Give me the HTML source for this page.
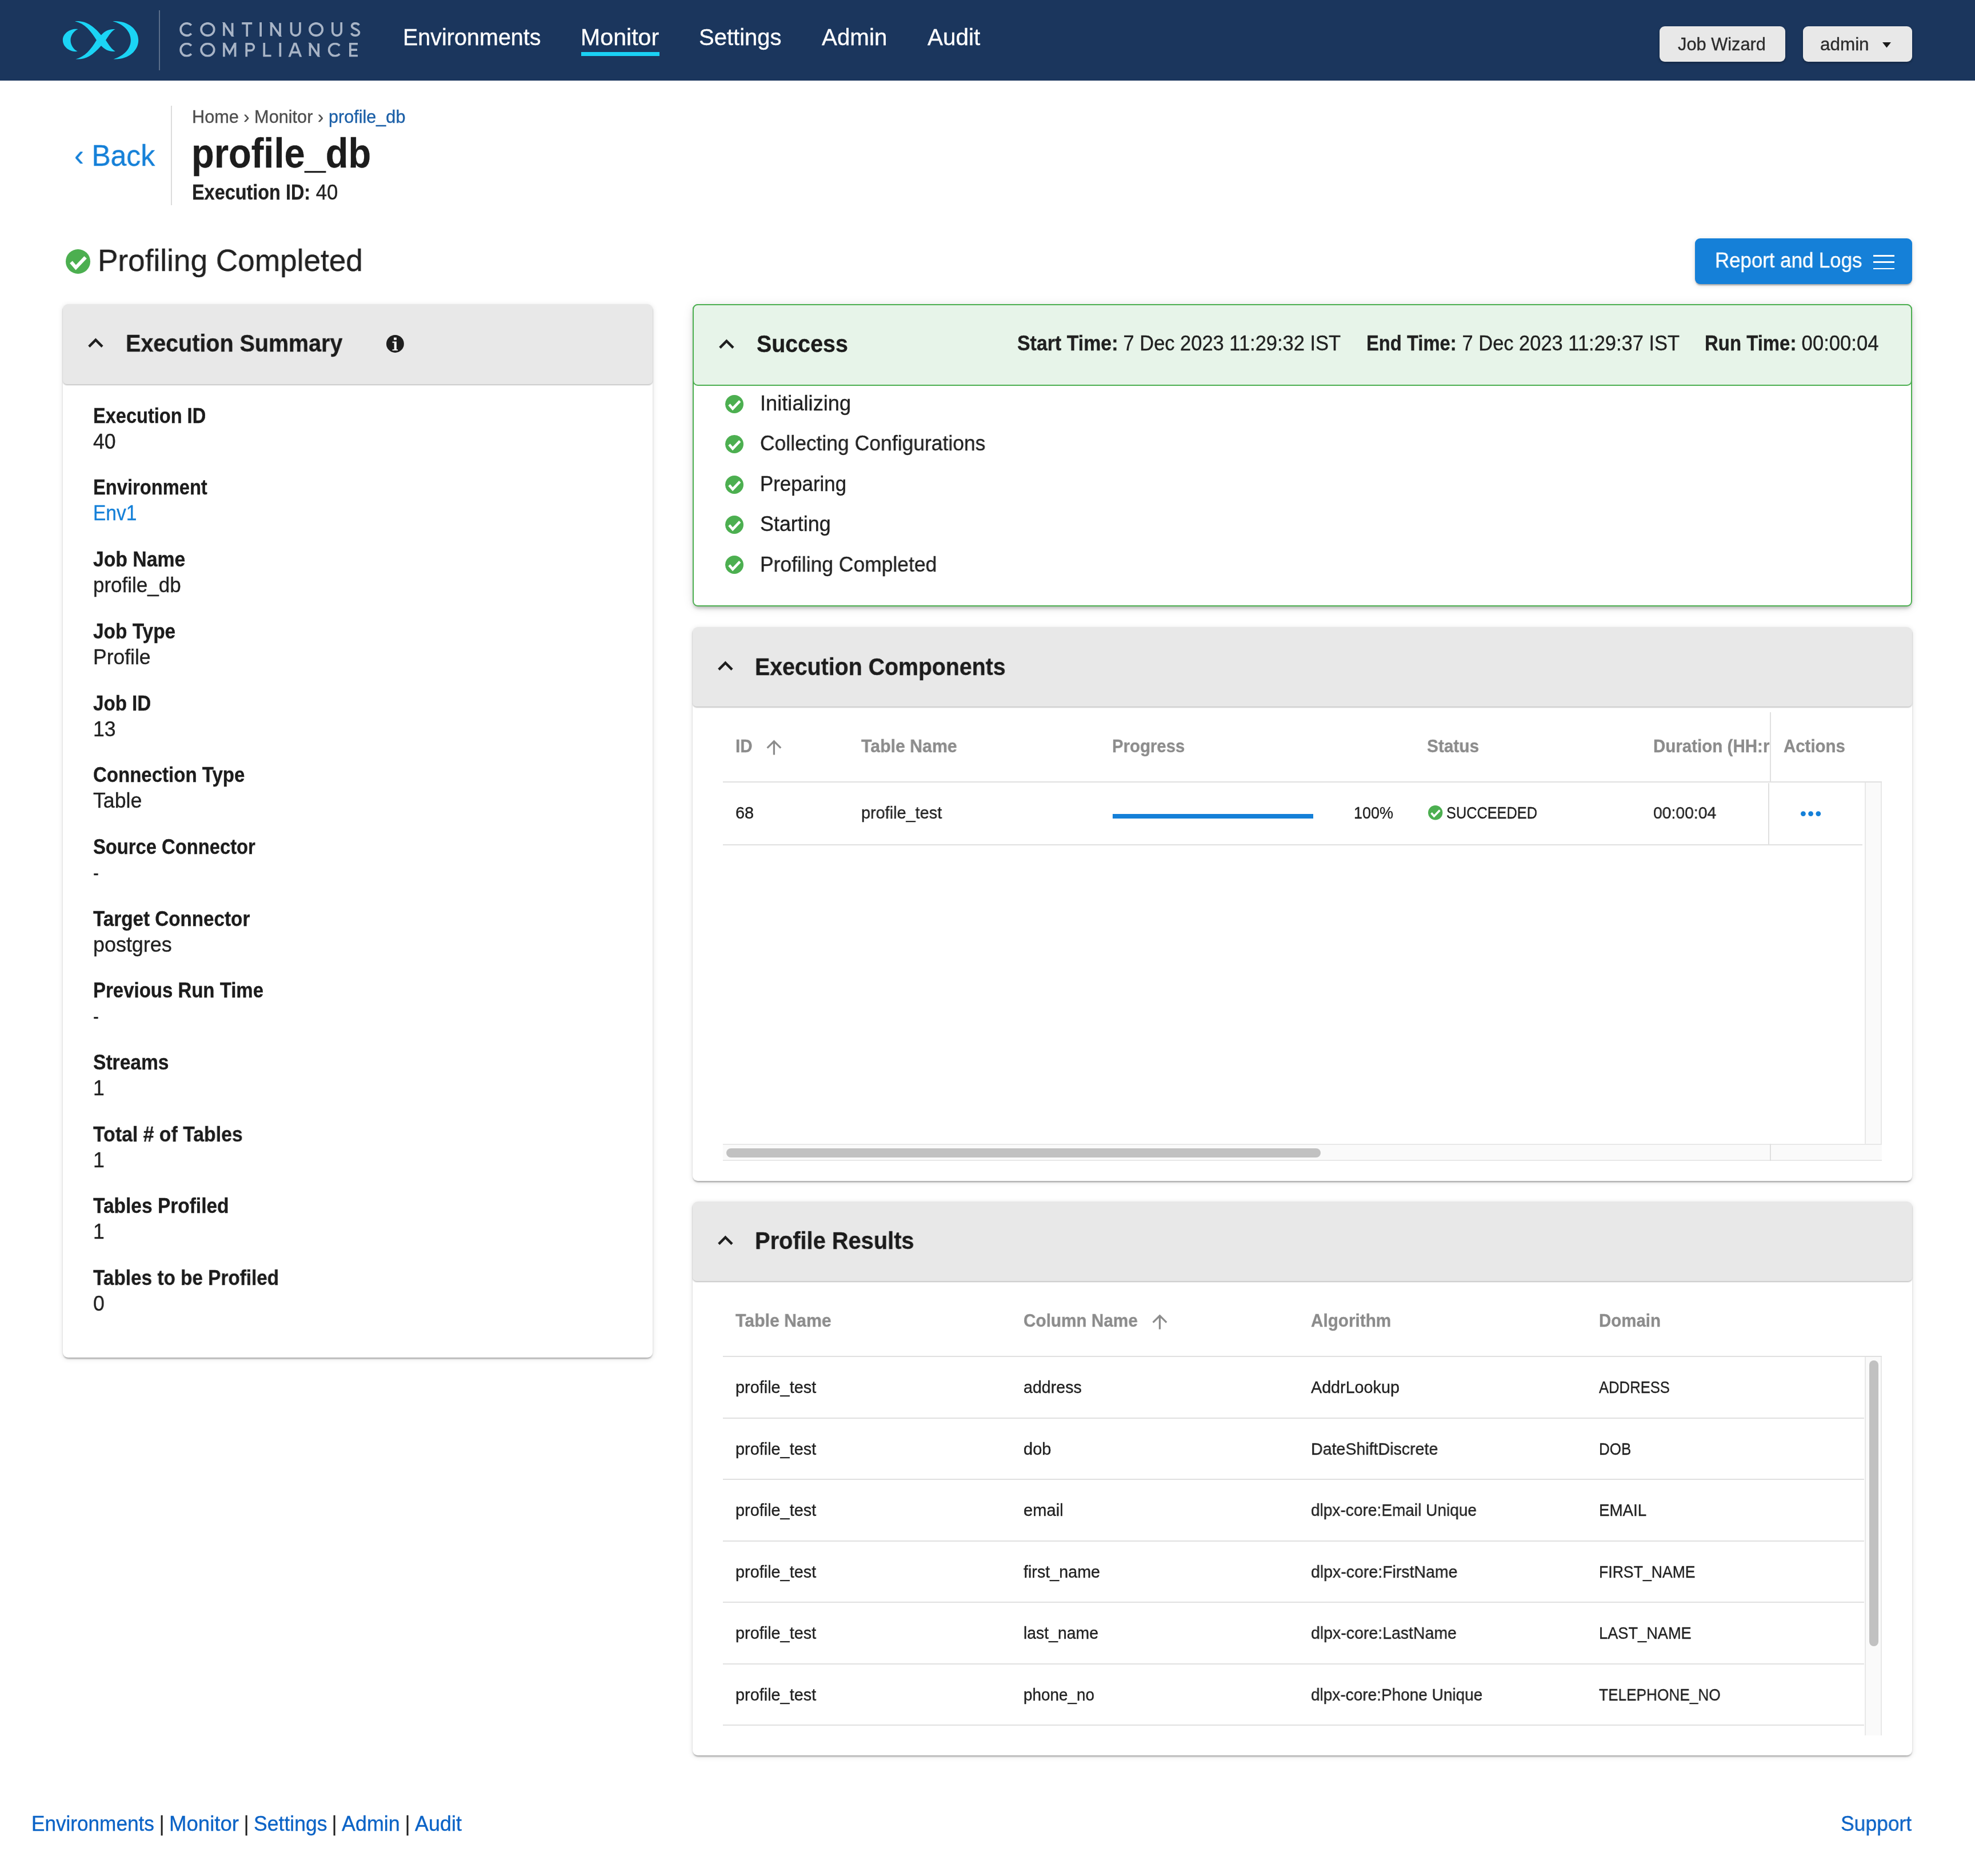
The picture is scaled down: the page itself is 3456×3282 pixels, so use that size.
<!DOCTYPE html>
<html><head><meta charset="utf-8"><title>profile_db - Monitor</title>
<style>
html,body{margin:0;padding:0;}
body{width:3456px;height:3282px;position:relative;overflow:hidden;background:#fff;font-family:"Liberation Sans",sans-serif;color:#212121;}
#root{position:absolute;left:0;top:0;width:3456px;height:3282px;overflow:hidden;will-change:transform;}
#root div{position:absolute;box-sizing:border-box;}
#root svg{position:absolute;overflow:visible;}
.t{position:absolute;white-space:pre;transform-origin:0 50%;display:block;-webkit-text-stroke:0.35px currentColor;}
</style></head>
<body><div id="root">
<div style="left:0px;top:0px;width:3456px;height:141px;background:#1b365d;"></div>
<svg style="left:100.0px;top:25.0px" width="160.0" height="90.0" viewBox="0 0 1975 1111" ><g fill="#1bd4f5"><path d="M450 322C300 300 122 400 122 560C122 720 300 830 440 800C350 760 290 660 290 560C290 460 350 370 450 322Z"/><path d="M385 150C600 140 760 220 950 450C1040 350 1140 310 1255 322C1180 360 1120 450 1050 560C1120 670 1180 760 1255 800C1140 815 1040 775 950 680C760 900 600 985 400 968C600 920 730 760 850 560C730 360 600 200 385 150Z"/><path d="M1200 150C1520 130 1755 320 1755 560C1755 800 1520 990 1215 968C1450 900 1590 740 1590 560C1590 380 1450 215 1200 150Z"/></g></svg>
<svg style="left:300.0px;top:25.0px" width="350.0" height="90.0" viewBox="0 0 1975 508" ><defs><clipPath id="cl1"><rect x="0" y="78.5" width="1975" height="142.0"/></clipPath><clipPath id="cl2"><rect x="0" y="280.5" width="1975" height="140.0"/></clipPath></defs><g fill="none" stroke="#a8b4c6" stroke-width="21" stroke-linejoin="miter" stroke-miterlimit="10"><path clip-path="url(#cl1)" d="M196.0 109.0A60.5 60.5 0 1 0 196.0 190.0M293.5 149.5a64 60.5 0 1 0 128 0a64 60.5 0 1 0 -128 0ZM518.5 86.5V212.5M601.5 86.5V212.5M501.9 61.3L618.1 237.7M695 89H797M746 89V220.5M881 78.5V220.5M985.5 86.5V212.5M1072.5 86.5V212.5M968.1 61.3L1089.9 237.7M1182.5 78.5V166.5a43.500 43.500 0 0 0 87 0V78.5M1365.500 149.5a63 60.5 0 1 0 126 0a63 60.5 0 1 0 -126 0ZM1590.500 78.5V166.5a43.500 43.500 0 0 0 87 0V78.5M1852 108C1840 84 1790 80 1782 112C1776 150 1852 140 1854 182C1852 218 1790 218 1776 186"/><path clip-path="url(#cl2)" d="M196.0 310.0A60.5 60.5 0 1 0 196.0 391.0M293.5 350.5a64 60.5 0 1 0 128 0a64 60.5 0 1 0 -128 0ZM518.5 420.5V280.5M629.5 420.5V280.5M505 258.5L574 384L643 258.5M740.5 420.5V291H781a33.500 33.500 0 0 1 0 67H740.5M915.5 280.5V410H985M1074 280.5V420.5M1160 434.5L1221 272.5L1282 434.5M1186 376H1256M1368.5 288.5V412.5M1451.5 288.5V412.5M1351.9 263.7L1468.1 437.3M1661.0 310.0A60.5 60.5 0 1 0 1661.0 391.0M1840 291H1765.500V410H1840M1765.500 350.5H1834"/></g></svg>
<div style="left:278px;top:18px;width:2px;height:105px;background:rgba(255,255,255,.28);"></div>
<div style="left:1017px;top:91px;width:136.5px;height:6.5px;background:#1ad1f5;"></div>
<div style="left:2904px;top:46px;width:220px;height:62px;background:#e8e8e8;border-radius:9px;box-shadow:0 2px 4px rgba(0,0,0,.3);"></div>
<div style="left:3155px;top:46px;width:191px;height:62px;background:#e8e8e8;border-radius:9px;box-shadow:0 2px 4px rgba(0,0,0,.3);"></div>
<svg style="left:3293.5px;top:73.5px" width="15.0" height="9.5" viewBox="0 0 15 9.5" ><path d="M0 0h15l-7.5 9.5z" fill="#1a1a1a"/></svg>
<div style="left:299px;top:185px;width:2px;height:174px;background:#dcdcdc;"></div>
<svg style="left:115.0px;top:435.5px" width="43.0" height="43.0" viewBox="0 0 100 100" ><circle cx="50" cy="50" r="50" fill="#4caf50"/><path d="M22 52.3L41.1 74.6L80.5 33.2" fill="none" stroke="#fff" stroke-width="14" stroke-linejoin="miter"/></svg>
<div style="left:2966px;top:417px;width:380px;height:80px;background:#1580d8;border-radius:9px;box-shadow:0 4px 3px -2px rgba(0,0,0,.2),0 2px 3px 0 rgba(0,0,0,.14),0 2px 10px 0 rgba(0,0,0,.13);"></div>
<div style="left:3278px;top:446px;width:37px;height:2.6px;background:#fff;"></div>
<div style="left:3278px;top:457.4px;width:37px;height:2.6px;background:#fff;"></div>
<div style="left:3278px;top:468.9px;width:37px;height:2.6px;background:#fff;"></div>
<div style="left:110px;top:532px;width:1032px;height:1843px;background:#fff;border-radius:9px;box-shadow:0 4px 3px -2px rgba(0,0,0,.2),0 2px 3px 0 rgba(0,0,0,.14),0 2px 10px 0 rgba(0,0,0,.13);"></div>
<div style="left:110px;top:532px;width:1032px;height:140px;background:#e8e8e8;border-radius:9px 9px 7px 7px;box-shadow:0 2px 2px rgba(0,0,0,.22);"></div>
<svg style="left:141.2px;top:574.4px" width="52.8" height="52.8" viewBox="0 0 24 24" ><path fill="#1f1f1f" d="M12 8l-6 6 1.41 1.41L12 10.83l4.59 4.59L18 14z"/></svg>
<svg style="left:676.1px;top:585.8px" width="30.9" height="30.9" viewBox="0 0 100 100" ><circle cx="50" cy="50" r="50" fill="#1e1e1e"/><path fill="#f2f2f2" d="M42.3 14.4H58V28.5H42.3ZM34.4 37.4H58V81.700H65V88.600H34.4V81.700H44.3V44.3H34.4Z"/></svg>
<div style="left:1212px;top:532px;width:2134px;height:529px;background:#fff;border:2px solid #4caf50;border-radius:9px;box-shadow:0 5px 6px -3px rgba(0,0,0,.2),0 4px 10px 0 rgba(0,0,0,.1),0 2px 18px 0 rgba(0,0,0,.1);"></div>
<div style="left:1212px;top:532px;width:2134px;height:143px;background:#e7f4e9;border:2px solid #4caf50;border-radius:9px;"></div>
<svg style="left:1245.3px;top:576.3px" width="52.8" height="52.8" viewBox="0 0 24 24" ><path fill="#1f1f1f" d="M12 8l-6 6 1.41 1.41L12 10.83l4.59 4.59L18 14z"/></svg>
<svg style="left:1268.7px;top:690.8px" width="32.0" height="32.0" viewBox="0 0 100 100" ><circle cx="50" cy="50" r="50" fill="#4caf50"/><path d="M22 52.3L41.1 74.6L80.5 33.2" fill="none" stroke="#fff" stroke-width="14" stroke-linejoin="miter"/></svg>
<svg style="left:1268.7px;top:761.1px" width="32.0" height="32.0" viewBox="0 0 100 100" ><circle cx="50" cy="50" r="50" fill="#4caf50"/><path d="M22 52.3L41.1 74.6L80.5 33.2" fill="none" stroke="#fff" stroke-width="14" stroke-linejoin="miter"/></svg>
<svg style="left:1268.7px;top:831.5px" width="32.0" height="32.0" viewBox="0 0 100 100" ><circle cx="50" cy="50" r="50" fill="#4caf50"/><path d="M22 52.3L41.1 74.6L80.5 33.2" fill="none" stroke="#fff" stroke-width="14" stroke-linejoin="miter"/></svg>
<svg style="left:1268.7px;top:901.8px" width="32.0" height="32.0" viewBox="0 0 100 100" ><circle cx="50" cy="50" r="50" fill="#4caf50"/><path d="M22 52.3L41.1 74.6L80.5 33.2" fill="none" stroke="#fff" stroke-width="14" stroke-linejoin="miter"/></svg>
<svg style="left:1268.7px;top:972.2px" width="32.0" height="32.0" viewBox="0 0 100 100" ><circle cx="50" cy="50" r="50" fill="#4caf50"/><path d="M22 52.3L41.1 74.6L80.5 33.2" fill="none" stroke="#fff" stroke-width="14" stroke-linejoin="miter"/></svg>
<div style="left:1212px;top:1097px;width:2134px;height:969px;background:#fff;border-radius:9px;box-shadow:0 4px 3px -2px rgba(0,0,0,.2),0 2px 3px 0 rgba(0,0,0,.14),0 2px 10px 0 rgba(0,0,0,.13);"></div>
<div style="left:1212px;top:1097px;width:2134px;height:139px;background:#e8e8e8;border-radius:9px 9px 7px 7px;box-shadow:0 2px 2px rgba(0,0,0,.22);"></div>
<svg style="left:1243.2px;top:1138.9px" width="52.8" height="52.8" viewBox="0 0 24 24" ><path fill="#1f1f1f" d="M12 8l-6 6 1.41 1.41L12 10.83l4.59 4.59L18 14z"/></svg>
<svg style="left:1334.8px;top:1287.5px" width="38.9" height="38.9" viewBox="0 0 24 24" ><path fill="#8c8c8c" d="M4 12l1.41 1.41L11 7.83V20h2V7.83l5.58 5.59L20 12l-8-8-8 8z"/></svg>
<div style="left:3097px;top:1246px;width:2px;height:122px;background:#e0e0e0;"></div>
<div style="left:3099px;top:1246px;width:194px;height:121px;background:#fff;"></div>
<div style="left:1265px;top:1367px;width:2028px;height:2px;background:#e0e0e0;"></div>
<div style="left:1947px;top:1424px;width:351px;height:8px;background:#1580d8;"></div>
<svg style="left:2498.9px;top:1408.7px" width="25.4" height="25.4" viewBox="0 0 100 100" ><circle cx="50" cy="50" r="50" fill="#4caf50"/><path d="M22 52.3L41.1 74.6L80.5 33.2" fill="none" stroke="#fff" stroke-width="14" stroke-linejoin="miter"/></svg>
<div style="left:3094px;top:1370px;width:2px;height:107px;background:#e0e0e0;"></div>
<svg style="left:3140.0px;top:1410.0px" width="60.0" height="28.0" viewBox="0 0 60 28" ><g fill="#1580d8"><circle cx="15.4" cy="13.6" r="4.4"/><circle cx="28.6" cy="13.6" r="4.4"/><circle cx="41.8" cy="13.6" r="4.4"/></g></svg>
<div style="left:1265px;top:1477px;width:1994px;height:2px;background:#e0e0e0;"></div>
<div style="left:3263px;top:1369px;width:30px;height:633px;background:#fafafa;border-left:2px solid #e8e8e8;border-right:2px solid #e8e8e8;"></div>
<div style="left:1265px;top:2001px;width:2028px;height:30px;background:#fafafa;border-top:2px solid #e8e8e8;border-bottom:2px solid #e8e8e8;"></div>
<div style="left:3097px;top:2001px;width:2px;height:30px;background:#e0e0e0;"></div>
<div style="left:1271px;top:2009px;width:1040px;height:16px;background:#c1c1c1;border-radius:8px;"></div>
<div style="left:1212px;top:2102px;width:2134px;height:969px;background:#fff;border-radius:9px;box-shadow:0 4px 3px -2px rgba(0,0,0,.2),0 2px 3px 0 rgba(0,0,0,.14),0 2px 10px 0 rgba(0,0,0,.13);"></div>
<div style="left:1212px;top:2102px;width:2134px;height:139px;background:#e8e8e8;border-radius:9px 9px 7px 7px;box-shadow:0 2px 2px rgba(0,0,0,.22);"></div>
<svg style="left:1243.2px;top:2143.9px" width="52.8" height="52.8" viewBox="0 0 24 24" ><path fill="#1f1f1f" d="M12 8l-6 6 1.41 1.41L12 10.83l4.59 4.59L18 14z"/></svg>
<svg style="left:2010.0px;top:2292.5px" width="38.9" height="38.9" viewBox="0 0 24 24" ><path fill="#8c8c8c" d="M4 12l1.41 1.41L11 7.83V20h2V7.83l5.58 5.59L20 12l-8-8-8 8z"/></svg>
<div style="left:1265px;top:2372px;width:2028px;height:2px;background:#e0e0e0;"></div>
<div style="left:1265px;top:2479.6px;width:1997px;height:2px;background:#e0e0e0;"></div>
<div style="left:1265px;top:2587.1px;width:1997px;height:2px;background:#e0e0e0;"></div>
<div style="left:1265px;top:2694.6px;width:1997px;height:2px;background:#e0e0e0;"></div>
<div style="left:1265px;top:2802.1px;width:1997px;height:2px;background:#e0e0e0;"></div>
<div style="left:1265px;top:2909.6px;width:1997px;height:2px;background:#e0e0e0;"></div>
<div style="left:1265px;top:3017.1px;width:1997px;height:2px;background:#e0e0e0;"></div>
<div style="left:3263px;top:2374px;width:30px;height:662px;background:#fafafa;border-left:2px solid #e8e8e8;border-right:2px solid #e8e8e8;"></div>
<div style="left:3271px;top:2380px;width:16px;height:500px;background:#c1c1c1;border-radius:8px;"></div>
<span class="t" style="left:704.6px;top:26.1px;font-size:40.59px;line-height:79px;color:#ffffff;transform:scaleX(0.9738);">Environments</span>
<span class="t" style="left:1015.9px;top:26.1px;font-size:40.59px;line-height:79px;color:#ffffff;transform:scaleX(1.0138);">Monitor</span>
<span class="t" style="left:1222.7px;top:26.1px;font-size:40.59px;line-height:79px;color:#ffffff;transform:scaleX(0.9858);">Settings</span>
<span class="t" style="left:1437.7px;top:26.1px;font-size:40.59px;line-height:79px;color:#ffffff;transform:scaleX(0.9944);">Admin</span>
<span class="t" style="left:1622.7px;top:26.1px;font-size:40.59px;line-height:79px;color:#ffffff;transform:scaleX(0.9984);">Audit</span>
<span class="t" style="left:2936.2px;top:46.4px;font-size:31.57px;line-height:62px;color:#2b2b2b;transform:scaleX(0.9745);">Job Wizard</span>
<span class="t" style="left:3185.1px;top:46.4px;font-size:31.57px;line-height:62px;color:#2b2b2b;transform:scaleX(0.9958);">admin</span>
<span class="t" style="left:129.6px;top:219.6px;font-size:52.68px;line-height:103px;color:#1580d8;transform:scaleX(0.9453);">‹ Back</span>
<span class="t" style="left:336.1px;top:173.1px;font-size:31.57px;line-height:62px;color:#4d4d4d;transform:scaleX(0.9719);">Home › Monitor › </span>
<span class="t" style="left:574.8px;top:173.1px;font-size:31.57px;line-height:62px;color:#1b5fa7;transform:scaleX(0.9696);">profile_db</span>
<span class="t" style="left:335.0px;top:198.0px;font-size:72.16px;line-height:141px;font-weight:700;color:#1c1c1c;transform:scaleX(0.9008);">profile_db</span>
<span class="t" style="left:336.0px;top:302.1px;font-size:36.08px;line-height:70px;font-weight:700;transform:scaleX(0.8983);">Execution ID:</span>
<span class="t" style="left:543.0px;top:302.1px;font-size:36.08px;line-height:70px;transform:scaleX(0.9628);"> 40</span>
<span class="t" style="left:171.3px;top:402.4px;font-size:54.12px;line-height:106px;transform:scaleX(0.9824);">Profiling Completed</span>
<span class="t" style="left:3001.0px;top:421.0px;font-size:36.08px;line-height:70px;color:#ffffff;transform:scaleX(0.9647);">Report and Logs</span>
<span class="t" style="left:219.6px;top:558.0px;font-size:43.30px;line-height:84px;font-weight:700;color:#1c1c1c;transform:scaleX(0.9113);">Execution Summary</span>
<span class="t" style="left:162.5px;top:692.7px;font-size:36.08px;line-height:70px;font-weight:700;color:#1c1c1c;transform:scaleX(0.9023);">Execution ID</span>
<span class="t" style="left:162.5px;top:737.7px;font-size:36.08px;line-height:70px;transform:scaleX(0.9861);">40</span>
<span class="t" style="left:162.5px;top:818.4px;font-size:36.08px;line-height:70px;font-weight:700;color:#1c1c1c;transform:scaleX(0.9059);">Environment</span>
<span class="t" style="left:162.5px;top:863.4px;font-size:36.08px;line-height:70px;color:#1580d8;transform:scaleX(0.9277);">Env1</span>
<span class="t" style="left:162.5px;top:944.1px;font-size:36.08px;line-height:70px;font-weight:700;color:#1c1c1c;transform:scaleX(0.9352);">Job Name</span>
<span class="t" style="left:162.5px;top:989.1px;font-size:36.08px;line-height:70px;transform:scaleX(0.9697);">profile_db</span>
<span class="t" style="left:162.5px;top:1069.8px;font-size:36.08px;line-height:70px;font-weight:700;color:#1c1c1c;transform:scaleX(0.9258);">Job Type</span>
<span class="t" style="left:162.5px;top:1114.8px;font-size:36.08px;line-height:70px;transform:scaleX(0.9837);">Profile</span>
<span class="t" style="left:162.5px;top:1195.5px;font-size:36.08px;line-height:70px;font-weight:700;color:#1c1c1c;transform:scaleX(0.9183);">Job ID</span>
<span class="t" style="left:162.5px;top:1240.5px;font-size:36.08px;line-height:70px;transform:scaleX(0.9861);">13</span>
<span class="t" style="left:162.5px;top:1321.2px;font-size:36.08px;line-height:70px;font-weight:700;color:#1c1c1c;transform:scaleX(0.9151);">Connection Type</span>
<span class="t" style="left:162.5px;top:1366.2px;font-size:36.08px;line-height:70px;transform:scaleX(0.9878);">Table</span>
<span class="t" style="left:162.5px;top:1446.9px;font-size:36.08px;line-height:70px;font-weight:700;color:#1c1c1c;transform:scaleX(0.9076);">Source Connector</span>
<span class="t" style="left:162.5px;top:1491.9px;font-size:36.08px;line-height:70px;transform:scaleX(0.8104);">-</span>
<span class="t" style="left:162.5px;top:1572.6px;font-size:36.08px;line-height:70px;font-weight:700;color:#1c1c1c;transform:scaleX(0.9205);">Target Connector</span>
<span class="t" style="left:162.5px;top:1617.6px;font-size:36.08px;line-height:70px;transform:scaleX(0.9953);">postgres</span>
<span class="t" style="left:162.5px;top:1698.3px;font-size:36.08px;line-height:70px;font-weight:700;color:#1c1c1c;transform:scaleX(0.9138);">Previous Run Time</span>
<span class="t" style="left:162.5px;top:1743.3px;font-size:36.08px;line-height:70px;transform:scaleX(0.8104);">-</span>
<span class="t" style="left:162.5px;top:1824.0px;font-size:36.08px;line-height:70px;font-weight:700;color:#1c1c1c;transform:scaleX(0.9309);">Streams</span>
<span class="t" style="left:162.5px;top:1869.0px;font-size:36.08px;line-height:70px;transform:scaleX(0.9857);">1</span>
<span class="t" style="left:162.5px;top:1949.7px;font-size:36.08px;line-height:70px;font-weight:700;color:#1c1c1c;transform:scaleX(0.9368);">Total # of Tables</span>
<span class="t" style="left:162.5px;top:1994.7px;font-size:36.08px;line-height:70px;transform:scaleX(0.9857);">1</span>
<span class="t" style="left:162.5px;top:2075.4px;font-size:36.08px;line-height:70px;font-weight:700;color:#1c1c1c;transform:scaleX(0.9280);">Tables Profiled</span>
<span class="t" style="left:162.5px;top:2120.4px;font-size:36.08px;line-height:70px;transform:scaleX(0.9857);">1</span>
<span class="t" style="left:162.5px;top:2201.1px;font-size:36.08px;line-height:70px;font-weight:700;color:#1c1c1c;transform:scaleX(0.9233);">Tables to be Profiled</span>
<span class="t" style="left:162.5px;top:2246.1px;font-size:36.08px;line-height:70px;transform:scaleX(0.9857);">0</span>
<span class="t" style="left:1324.1px;top:559.0px;font-size:43.30px;line-height:84px;font-weight:700;color:#1c1c1c;transform:scaleX(0.9099);">Success</span>
<span class="t" style="left:1780.0px;top:566.0px;font-size:36.08px;line-height:70px;font-weight:700;transform:scaleX(0.9397);">Start Time:</span>
<span class="t" style="left:1956.4px;top:566.0px;font-size:36.08px;line-height:70px;transform:scaleX(0.9547);"> 7 Dec 2023 11:29:32 IST</span>
<span class="t" style="left:2391.0px;top:566.0px;font-size:36.08px;line-height:70px;font-weight:700;transform:scaleX(0.9078);">End Time:</span>
<span class="t" style="left:2548.7px;top:566.0px;font-size:36.08px;line-height:70px;transform:scaleX(0.9547);"> 7 Dec 2023 11:29:37 IST</span>
<span class="t" style="left:2982.6px;top:566.0px;font-size:36.08px;line-height:70px;font-weight:700;transform:scaleX(0.9125);">Run Time:</span>
<span class="t" style="left:3142.9px;top:566.0px;font-size:36.08px;line-height:70px;transform:scaleX(0.9602);"> 00:00:04</span>
<span class="t" style="left:1330.0px;top:671.1px;font-size:36.08px;line-height:70px;transform:scaleX(1.0045);">Initializing</span>
<span class="t" style="left:1330.0px;top:741.4px;font-size:36.08px;line-height:70px;transform:scaleX(0.9834);">Collecting Configurations</span>
<span class="t" style="left:1330.0px;top:811.8px;font-size:36.08px;line-height:70px;transform:scaleX(0.9657);">Preparing</span>
<span class="t" style="left:1330.0px;top:882.1px;font-size:36.08px;line-height:70px;transform:scaleX(0.9942);">Starting</span>
<span class="t" style="left:1330.0px;top:952.5px;font-size:36.08px;line-height:70px;transform:scaleX(0.9824);">Profiling Completed</span>
<span class="t" style="left:1321.4px;top:1123.6px;font-size:43.30px;line-height:84px;font-weight:700;color:#1c1c1c;transform:scaleX(0.9072);">Execution Components</span>
<span class="t" style="left:1286.9px;top:1274.3px;font-size:32.18px;line-height:63px;font-weight:700;color:#8c8c8c;transform:scaleX(0.9193);">ID</span>
<span class="t" style="left:1506.7px;top:1274.3px;font-size:32.18px;line-height:63px;font-weight:700;color:#8c8c8c;transform:scaleX(0.9413);">Table Name</span>
<span class="t" style="left:1946.1px;top:1274.3px;font-size:32.18px;line-height:63px;font-weight:700;color:#8c8c8c;transform:scaleX(0.9127);">Progress</span>
<span class="t" style="left:2496.9px;top:1274.3px;font-size:32.18px;line-height:63px;font-weight:700;color:#8c8c8c;transform:scaleX(0.9262);">Status</span>
<span class="t" style="left:2893.1px;top:1274.3px;font-size:32.18px;line-height:63px;font-weight:700;color:#8c8c8c;transform:scaleX(0.9179);">Duration (HH:r</span>
<span class="t" style="left:3120.8px;top:1274.3px;font-size:32.18px;line-height:63px;font-weight:700;color:#8c8c8c;transform:scaleX(0.9139);">Actions</span>
<span class="t" style="left:1287.0px;top:1392.7px;font-size:29.31px;line-height:57px;transform:scaleX(0.9857);">68</span>
<span class="t" style="left:1506.8px;top:1392.7px;font-size:29.31px;line-height:57px;transform:scaleX(0.9853);">profile_test</span>
<span class="t" style="left:2368.8px;top:1392.7px;font-size:29.31px;line-height:57px;transform:scaleX(0.9225);">100%</span>
<span class="t" style="left:2531.2px;top:1392.7px;font-size:29.31px;line-height:57px;transform:scaleX(0.8641);">SUCCEEDED</span>
<span class="t" style="left:2893.2px;top:1392.7px;font-size:29.31px;line-height:57px;transform:scaleX(0.9666);">00:00:04</span>
<span class="t" style="left:1321.4px;top:2128.0px;font-size:43.30px;line-height:84px;font-weight:700;color:#1c1c1c;transform:scaleX(0.9188);">Profile Results</span>
<span class="t" style="left:1286.9px;top:2279.3px;font-size:32.18px;line-height:63px;font-weight:700;color:#8c8c8c;transform:scaleX(0.9413);">Table Name</span>
<span class="t" style="left:1790.7px;top:2279.3px;font-size:32.18px;line-height:63px;font-weight:700;color:#8c8c8c;transform:scaleX(0.9237);">Column Name</span>
<span class="t" style="left:2293.9px;top:2279.3px;font-size:32.18px;line-height:63px;font-weight:700;color:#8c8c8c;transform:scaleX(0.9232);">Algorithm</span>
<span class="t" style="left:2797.6px;top:2279.3px;font-size:32.18px;line-height:63px;font-weight:700;color:#8c8c8c;transform:scaleX(0.9155);">Domain</span>
<span class="t" style="left:1287.0px;top:2398.3px;font-size:29.31px;line-height:57px;transform:scaleX(0.9853);">profile_test</span>
<span class="t" style="left:1790.8px;top:2398.3px;font-size:29.31px;line-height:57px;transform:scaleX(0.9774);">address</span>
<span class="t" style="left:2294.0px;top:2398.3px;font-size:29.31px;line-height:57px;transform:scaleX(0.9801);">AddrLookup</span>
<span class="t" style="left:2797.7px;top:2398.3px;font-size:29.31px;line-height:57px;transform:scaleX(0.8752);">ADDRESS</span>
<span class="t" style="left:1287.0px;top:2505.8px;font-size:29.31px;line-height:57px;transform:scaleX(0.9853);">profile_test</span>
<span class="t" style="left:1790.8px;top:2505.8px;font-size:29.31px;line-height:57px;transform:scaleX(0.9916);">dob</span>
<span class="t" style="left:2294.0px;top:2505.8px;font-size:29.31px;line-height:57px;transform:scaleX(0.9751);">DateShiftDiscrete</span>
<span class="t" style="left:2797.7px;top:2505.8px;font-size:29.31px;line-height:57px;transform:scaleX(0.8858);">DOB</span>
<span class="t" style="left:1287.0px;top:2613.3px;font-size:29.31px;line-height:57px;transform:scaleX(0.9853);">profile_test</span>
<span class="t" style="left:1790.8px;top:2613.3px;font-size:29.31px;line-height:57px;transform:scaleX(0.9950);">email</span>
<span class="t" style="left:2294.0px;top:2613.3px;font-size:29.31px;line-height:57px;transform:scaleX(0.9576);">dlpx-core:Email Unique</span>
<span class="t" style="left:2797.7px;top:2613.3px;font-size:29.31px;line-height:57px;transform:scaleX(0.9470);">EMAIL</span>
<span class="t" style="left:1287.0px;top:2720.8px;font-size:29.31px;line-height:57px;transform:scaleX(0.9853);">profile_test</span>
<span class="t" style="left:1790.8px;top:2720.8px;font-size:29.31px;line-height:57px;transform:scaleX(0.9803);">first_name</span>
<span class="t" style="left:2294.0px;top:2720.8px;font-size:29.31px;line-height:57px;transform:scaleX(0.9724);">dlpx-core:FirstName</span>
<span class="t" style="left:2797.7px;top:2720.8px;font-size:29.31px;line-height:57px;transform:scaleX(0.9085);">FIRST_NAME</span>
<span class="t" style="left:1287.0px;top:2828.3px;font-size:29.31px;line-height:57px;transform:scaleX(0.9853);">profile_test</span>
<span class="t" style="left:1790.8px;top:2828.3px;font-size:29.31px;line-height:57px;transform:scaleX(0.9695);">last_name</span>
<span class="t" style="left:2294.0px;top:2828.3px;font-size:29.31px;line-height:57px;transform:scaleX(0.9725);">dlpx-core:LastName</span>
<span class="t" style="left:2797.7px;top:2828.3px;font-size:29.31px;line-height:57px;transform:scaleX(0.9283);">LAST_NAME</span>
<span class="t" style="left:1287.0px;top:2935.8px;font-size:29.31px;line-height:57px;transform:scaleX(0.9853);">profile_test</span>
<span class="t" style="left:1790.8px;top:2935.8px;font-size:29.31px;line-height:57px;transform:scaleX(0.9514);">phone_no</span>
<span class="t" style="left:2294.0px;top:2935.8px;font-size:29.31px;line-height:57px;transform:scaleX(0.9553);">dlpx-core:Phone Unique</span>
<span class="t" style="left:2797.7px;top:2935.8px;font-size:29.31px;line-height:57px;transform:scaleX(0.8945);">TELEPHONE_NO</span>
<span class="t" style="left:55.0px;top:3156.3px;font-size:36.08px;line-height:70px;color:#0b63c6;transform:scaleX(0.9738);">Environments</span>
<span class="t" style="left:269.7px;top:3156.3px;font-size:36.08px;line-height:70px;transform:scaleX(0.8859);"> | </span>
<span class="t" style="left:295.8px;top:3156.3px;font-size:36.08px;line-height:70px;color:#0b63c6;transform:scaleX(1.0138);">Monitor</span>
<span class="t" style="left:417.7px;top:3156.3px;font-size:36.08px;line-height:70px;transform:scaleX(0.8859);"> | </span>
<span class="t" style="left:443.8px;top:3156.3px;font-size:36.08px;line-height:70px;color:#0b63c6;transform:scaleX(0.9858);">Settings</span>
<span class="t" style="left:572.3px;top:3156.3px;font-size:36.08px;line-height:70px;transform:scaleX(0.8859);"> | </span>
<span class="t" style="left:598.4px;top:3156.3px;font-size:36.08px;line-height:70px;color:#0b63c6;transform:scaleX(0.9943);">Admin</span>
<span class="t" style="left:700.0px;top:3156.3px;font-size:36.08px;line-height:70px;transform:scaleX(0.8859);"> | </span>
<span class="t" style="left:726.1px;top:3156.3px;font-size:36.08px;line-height:70px;color:#0b63c6;transform:scaleX(0.9984);">Audit</span>
<span class="t" style="left:3220.8px;top:3156.3px;font-size:36.08px;line-height:70px;color:#0b63c6;transform:scaleX(0.9829);">Support</span>
</div></body></html>
